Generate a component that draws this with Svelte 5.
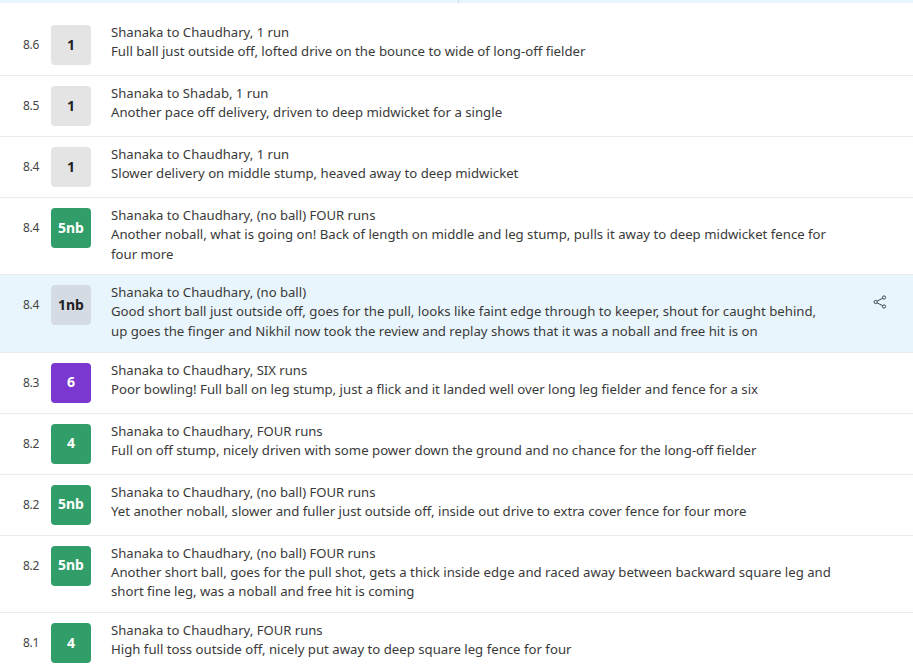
<script lang="ts">
  const BALLS = [
    { over: "8.6", score: "1", kind: "dot", title: "Shanaka to Chaudhary, 1 run", text: "Full ball just outside off, lofted drive on the bounce to wide of long-off fielder" },
    { over: "8.5", score: "1", kind: "dot", title: "Shanaka to Shadab, 1 run", text: "Another pace off delivery, driven to deep midwicket for a single" },
    { over: "8.4", score: "1", kind: "dot", title: "Shanaka to Chaudhary, 1 run", text: "Slower delivery on middle stump, heaved away to deep midwicket" },
    { over: "8.4", score: "5nb", kind: "four", title: "Shanaka to Chaudhary, (no ball) FOUR runs", text: "Another noball, what is going on! Back of length on middle and leg stump, pulls it away to deep midwicket fence for four more" },
    { over: "8.4", score: "1nb", kind: "extra", active: true, title: "Shanaka to Chaudhary, (no ball)", text: "Good short ball just outside off, goes for the pull, looks like faint edge through to keeper, shout for caught behind, up goes the finger and Nikhil now took the review and replay shows that it was a noball and free hit is on" },
    { over: "8.3", score: "6", kind: "six", title: "Shanaka to Chaudhary, SIX runs", text: "Poor bowling! Full ball on leg stump, just a flick and it landed well over long leg fielder and fence for a six" },
    { over: "8.2", score: "4", kind: "four", title: "Shanaka to Chaudhary, FOUR runs", text: "Full on off stump, nicely driven with some power down the ground and no chance for the long-off fielder" },
    { over: "8.2", score: "5nb", kind: "four", title: "Shanaka to Chaudhary, (no ball) FOUR runs", text: "Yet another noball, slower and fuller just outside off, inside out drive to extra cover fence for four more" },
    { over: "8.2", score: "5nb", kind: "four", title: "Shanaka to Chaudhary, (no ball) FOUR runs", text: "Another short ball, goes for the pull shot, gets a thick inside edge and raced away between backward square leg and short fine leg, was a noball and free hit is coming" },
    { over: "8.1", score: "4", kind: "four", title: "Shanaka to Chaudhary, FOUR runs", text: "High full toss outside off, nicely put away to deep square leg fence for four" },
  ];
</script>

<div class="page">
  <div class="topbar"><span class="tick"></span></div>

  <ul class="feed">
    {#each BALLS as ball}
      <li class="ball" class:active={ball.active}>
        <span class="over">{ball.over}</span>
        <span class="score {ball.kind}">{ball.score}</span>
        <div class="body">
          <div class="title">{ball.title}</div>
          <div class="text">{ball.text}</div>
        </div>
        <div class="actions">
          {#if ball.active}
            <svg width="14" height="14" viewBox="0 0 14 14" fill="none" stroke="#3c4650" stroke-width="1">
              <circle cx="11" cy="2.5" r="1.6" />
              <circle cx="11" cy="11.5" r="1.6" />
              <circle cx="2.6" cy="7" r="1.6" />
              <path d="M9.6 3.3 4 6.2M4 7.8l5.6 2.9" />
            </svg>
          {/if}
        </div>
      </li>
    {/each}
  </ul>
</div>

<style>
  :global(body) {
    margin: 0;
    background: #fff;
    font-family: "Noto Sans", sans-serif;
  }

  .page {
    height: 671px;
    overflow: hidden;
  }

  .topbar {
    height: 3px;
    background: #e9f5fc;
    display: flex;
    justify-content: center;
  }

  .tick {
    width: 1px;
    height: 3px;
    margin-left: 3px;
    background: #d0d5da;
  }

  .feed {
    list-style: none;
    margin: 12px 0 0;
    padding: 0;
  }

  .ball {
    display: flex;
    align-items: flex-start;
    padding: 10px 0;
    border-bottom: 1px solid #ebebeb;
  }

  .ball.active {
    background: #e9f5fc;
  }

  .over {
    width: 51px;
    padding-left: 23px;
    box-sizing: border-box;
    font-size: 12px;
    line-height: 40px;
    color: #444;
    letter-spacing: -0.3px;
  }

  .score {
    flex: none;
    box-sizing: border-box;
    width: 40px;
    height: 40px;
    padding-bottom: 2px;
    border-radius: 4px;
    display: flex;
    align-items: center;
    justify-content: center;
    font-size: 14px;
    font-weight: 700;
  }

  .score.dot {
    background: #e4e4e4;
    color: #222;
  }

  .score.extra {
    background: #d4dbe2;
    color: #222;
  }

  .score.four {
    background: #319e6a;
    color: #fff;
  }

  .score.six {
    background: #7b38d0;
    color: #fff;
  }

  .body {
    width: 723px;
    margin: -1px 0 0 20px;
    padding-bottom: 0.4px;
    color: #3a3a3a;
  }

  .title {
    font-size: 13.1px;
    line-height: 17px;
    margin-bottom: 1px;
  }

  .text {
    font-size: 13.2px;
    line-height: 19.5px;
  }

  .actions {
    margin-left: 39px;
    width: 14px;
    padding-top: 10px;
  }

  .actions svg {
    display: block;
  }
</style>
